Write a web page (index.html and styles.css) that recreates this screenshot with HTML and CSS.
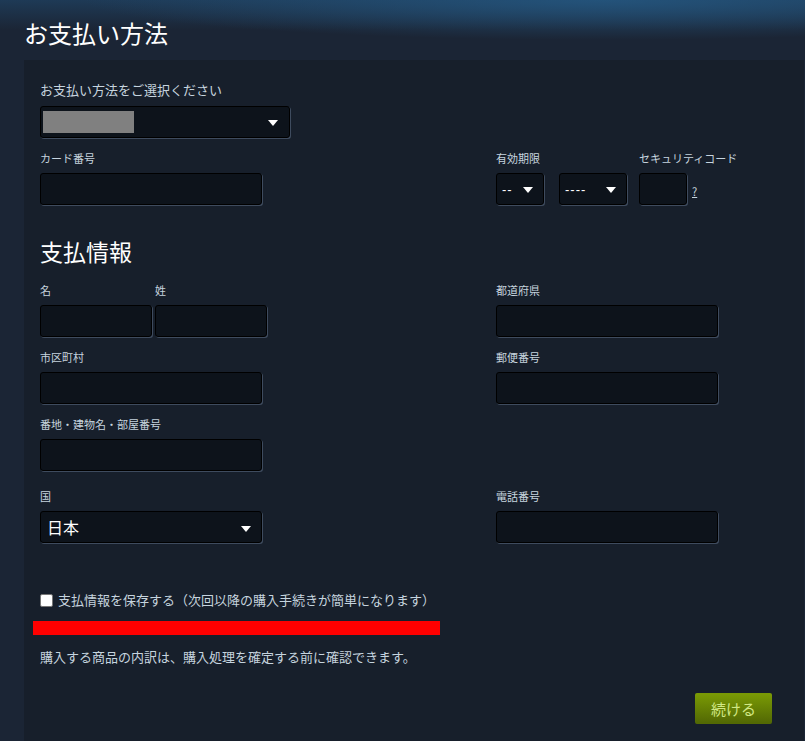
FILE: index.html
```html
<!DOCTYPE html>
<html lang="ja">
<head>
<meta charset="utf-8">
<title>お支払い方法</title>
<link rel="stylesheet" href="styles.css">
</head>
<body>
<header class="page-header">
  <h1 class="page-title">お支払い方法</h1>
</header>
<main class="panel">
  <div class="field">
    <label class="label label-lg">お支払い方法をご選択ください</label>
    <div class="select select-method"><span class="redacted"></span><span class="arrow"></span></div>
  </div>

  <div class="row row-card">
    <div class="col-left">
      <div class="field">
        <label class="label">カード番号</label>
        <div class="input w-full"></div>
      </div>
    </div>
    <div class="col-right expiry-row">
      <div class="field">
        <label class="label">有効期限</label>
        <div class="expiry">
          <div class="select select-month"><span class="sel-text">--</span><span class="arrow"></span></div>
          <div class="select select-year"><span class="sel-text">----</span><span class="arrow"></span></div>
        </div>
      </div>
      <div class="field">
        <label class="label">セキュリティコード</label>
        <div class="cvv"><div class="input w-cvv"></div><a class="help">?</a></div>
      </div>
    </div>
  </div>

  <h2 class="section-title">支払情報</h2>

  <div class="row">
    <div class="col-left names">
      <div class="field">
        <label class="label">名</label>
        <div class="input w-half"></div>
      </div>
      <div class="field">
        <label class="label">姓</label>
        <div class="input w-half"></div>
      </div>
    </div>
    <div class="col-right">
      <div class="field">
        <label class="label">都道府県</label>
        <div class="input w-full"></div>
      </div>
    </div>
  </div>

  <div class="row">
    <div class="col-left">
      <div class="field">
        <label class="label">市区町村</label>
        <div class="input w-full"></div>
      </div>
    </div>
    <div class="col-right">
      <div class="field">
        <label class="label">郵便番号</label>
        <div class="input w-full"></div>
      </div>
    </div>
  </div>

  <div class="row">
    <div class="col-left">
      <div class="field">
        <label class="label">番地・建物名・部屋番号</label>
        <div class="input w-full"></div>
      </div>
    </div>
  </div>

  <div class="row row-country">
    <div class="col-left">
      <div class="field">
        <label class="label">国</label>
        <div class="select select-country"><span class="country-text">日本</span><span class="arrow"></span></div>
      </div>
    </div>
    <div class="col-right">
      <div class="field">
        <label class="label">電話番号</label>
        <div class="input w-full"></div>
      </div>
    </div>
  </div>

  <label class="save">
    <span class="checkbox"></span>
    <span class="save-text">支払情報を保存する（次回以降の購入手続きが簡単になります）</span>
  </label>
  <div class="redbar"></div>

  <p class="notice">購入する商品の内訳は、購入処理を確定する前に確認できます。</p>

  <div class="actions">
    <button class="btn-continue">続ける</button>
  </div>
</main>
</body>
</html>
```

FILE: styles.css
```css
* { box-sizing: border-box; }
html, body { margin: 0; padding: 0; }
body {
  width: 805px;
  height: 741px;
  overflow: hidden;
  font-family: "Noto Sans CJK JP", "Noto Sans", sans-serif;
  color: #c6d4df;
  background: #1b2535;
}
.page-header {
  height: 60px;
  padding-left: 24px;
  padding-top: 17px;
  background:
    radial-gradient(ellipse 520px 40px at 75% 0, rgba(36, 84, 124, 0.95), rgba(36, 84, 124, 0) 100%),
    linear-gradient(#1e3a56 0, #1b2535 30px);
}
.page-title {
  margin: 0;
  font-size: 24px;
  line-height: 32px;
  font-weight: 400;
  color: #ffffff;
}
.panel {
  margin-left: 24px;
  width: 780px;
  height: 681px;
  background: #171f2b;
  padding: 21px 16px 0 16px;
}
.field { display: flex; flex-direction: column; }
.label {
  font-size: 11px;
  line-height: 16px;
  height: 16px;
  margin-bottom: 7px;
  color: #c6d4df;
  white-space: nowrap;
}
.label-lg {
  font-size: 13px;
  line-height: 18px;
  height: 18px;
}
.input, .select {
  height: 32px;
  background: #0d131b;
  border: 1px solid #000;
  border-radius: 3px;
  box-shadow: 1px 1px 0 #3e4b5e;
}
.w-full { width: 222px; }
.w-half { width: 112px; }
.w-cvv { width: 48px; }
.select {
  display: flex;
  align-items: center;
  position: relative;
}
.arrow {
  position: absolute;
  right: 10px;
  top: 13px;
  width: 0;
  height: 0;
  border-left: 5px solid transparent;
  border-right: 5px solid transparent;
  border-top: 6px solid #ffffff;
}
.select-method { width: 250px; }
.select-method .arrow { right: 11px; }
.redacted {
  margin-left: 2px;
  width: 91px;
  height: 22px;
  background: #808080;
}
.row { display: flex; margin-top: 12px; }
.row-card { margin-top: 12px; }
.col-left { width: 456px; flex: none; }
.col-right { flex: 1; }
.names { display: flex; gap: 3px; }
.expiry-row { display: flex; gap: 12px; }
.expiry { display: flex; gap: 15px; }
.select-month { width: 48px; }
.select-year { width: 68px; }
.sel-text {
  margin-left: 5px;
  font-family: "Liberation Sans", sans-serif;
  font-size: 13px;
  color: #ffffff;
  letter-spacing: 1px;
}
.select-month .arrow, .select-year .arrow { right: 10px; }
.cvv { display: flex; align-items: center; gap: 5px; }
.help {
  font-size: 11px;
  color: #c6d4df;
  text-decoration: underline;
  margin-top: 3px;
}
.section-title {
  margin: 30px 0 15px 0;
  font-size: 23px;
  line-height: 32px;
  font-weight: 400;
  color: #ffffff;
}
.row-country { margin-top: 17px; }
.select-country { width: 222px; }
.country-text {
  margin-left: 6px;
  font-size: 16px;
  color: #ffffff;
}
.select-country .arrow { right: 10px; top: 14px; }
.save {
  display: flex;
  align-items: center;
  margin-top: 48px;
  height: 18px;
}
.checkbox {
  width: 13px;
  height: 13px;
  background: #ffffff;
  border: 1px solid #767676;
  border-radius: 2px;
  margin-right: 5px;
}
.save-text {
  font-size: 13px;
  line-height: 18px;
  color: #c6d4df;
}
.redbar {
  margin-top: 12px;
  margin-left: -7px;
  width: 407px;
  height: 14px;
  background: #ff0000;
}
.notice {
  margin: 13px 0 0 0;
  font-size: 13px;
  line-height: 18px;
  color: #c6d4df;
}
.actions {
  display: flex;
  justify-content: flex-end;
  margin-top: 27px;
  padding-right: 16px;
}
.btn-continue {
  width: 77px;
  height: 31px;
  border: none;
  border-radius: 2px;
  background: linear-gradient(to bottom, #799905 5%, #536904 95%);
  color: #d2e885;
  font-family: "Noto Sans CJK JP", sans-serif;
  font-size: 15px;
  padding: 0;
}
```
